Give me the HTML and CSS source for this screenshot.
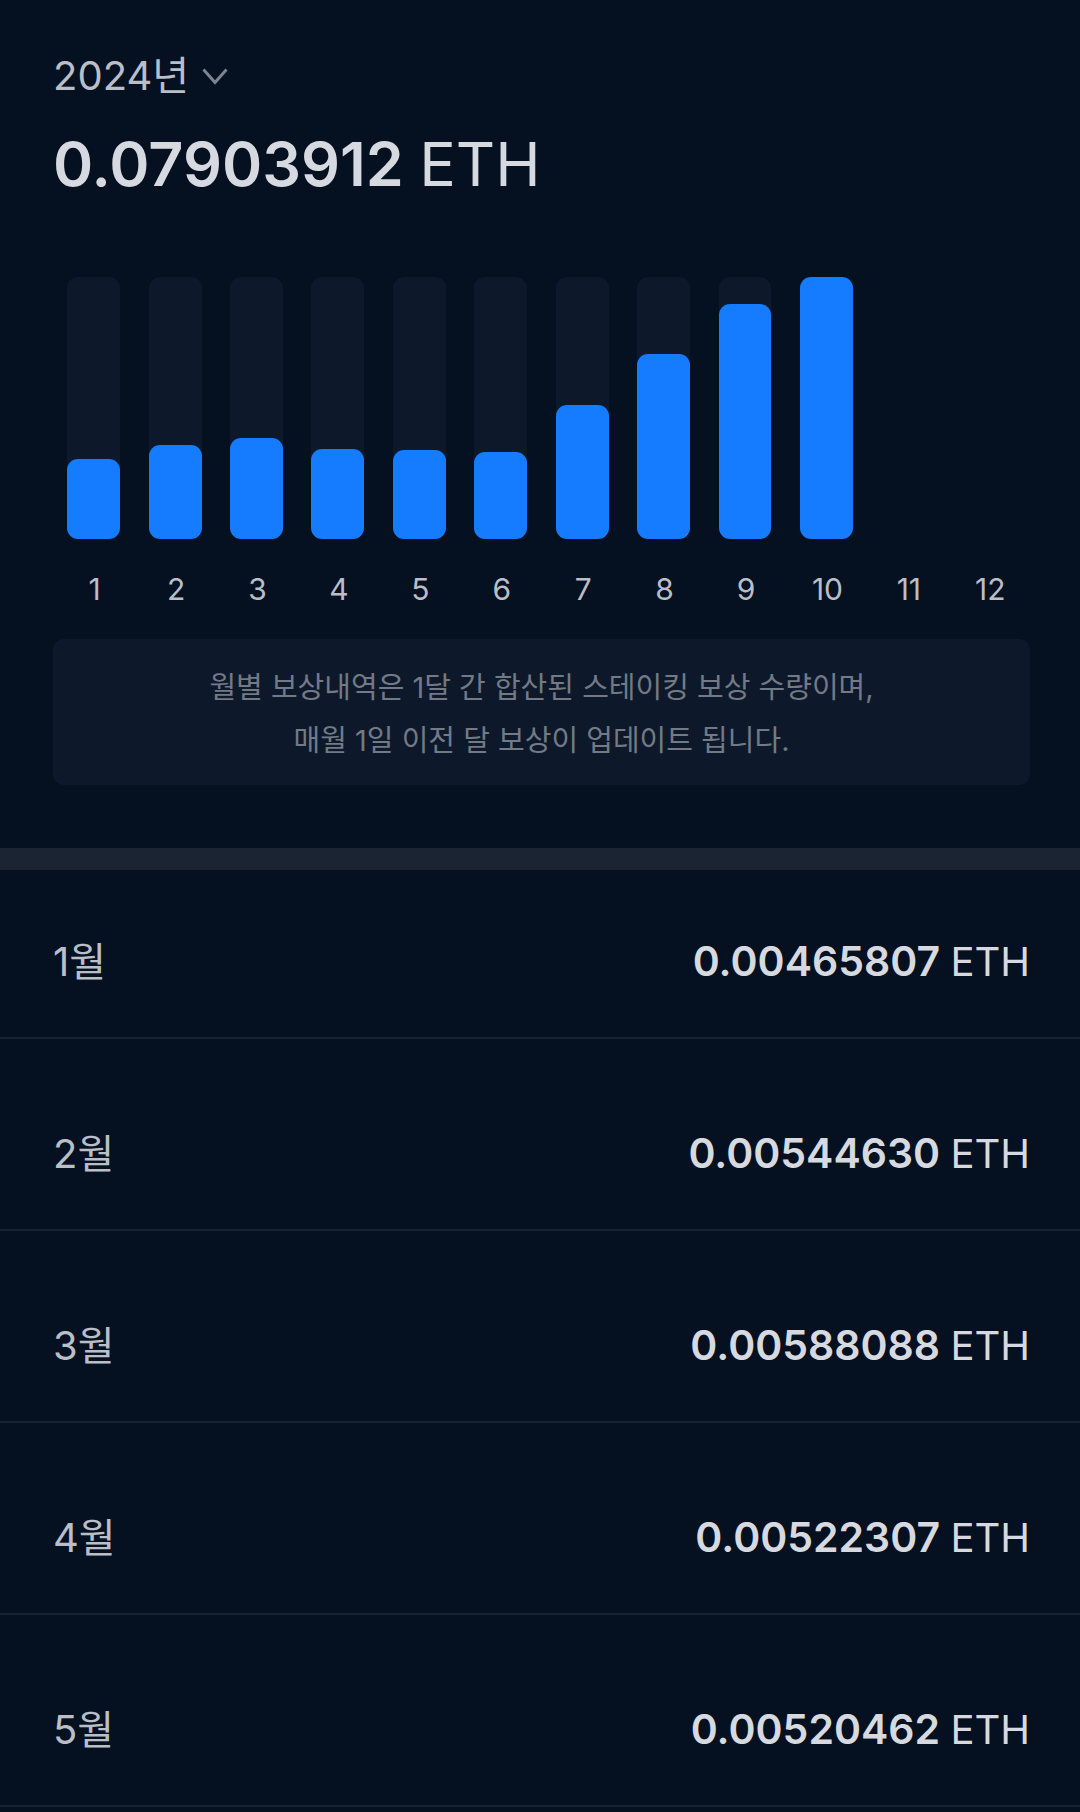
FILE: index.html
```html
<!DOCTYPE html>
<html lang="ko">
<head>
<meta charset="utf-8">
<meta name="viewport" content="width=device-width, initial-scale=1">
<title>스테이킹 보상</title>
<link rel="stylesheet" href="styles.css">
</head>
<body>
<main class="page">
  <section class="summary">
    <div class="year">
      <select class="year-select" aria-label="연도">
        <option>2024년</option>
      </select>
      <svg class="year-icon" viewBox="0 0 26 18" aria-hidden="true"><path d="M1.500 2.500 13 15.500 24.500 2.500"/></svg>
    </div>
    <h1 class="total">0.07903912 <span class="unit">ETH</span></h1>
    <ol class="chart">
      <li class="month"><div class="track"><div class="bar" style="height:30.500%"></div></div><span class="label">1</span></li>
      <li class="month"><div class="track"><div class="bar" style="height:35.800%"></div></div><span class="label">2</span></li>
      <li class="month"><div class="track"><div class="bar" style="height:38.600%"></div></div><span class="label">3</span></li>
      <li class="month"><div class="track"><div class="bar" style="height:34.300%"></div></div><span class="label">4</span></li>
      <li class="month"><div class="track"><div class="bar" style="height:34.100%"></div></div><span class="label">5</span></li>
      <li class="month"><div class="track"><div class="bar" style="height:33.300%"></div></div><span class="label">6</span></li>
      <li class="month"><div class="track"><div class="bar" style="height:51.100%"></div></div><span class="label">7</span></li>
      <li class="month"><div class="track"><div class="bar" style="height:70.500%"></div></div><span class="label">8</span></li>
      <li class="month"><div class="track"><div class="bar" style="height:89.800%"></div></div><span class="label">9</span></li>
      <li class="month"><div class="track"><div class="bar" style="height:100%"></div></div><span class="label">10</span></li>
      <li class="month"><div class="track track-empty"></div><span class="label">11</span></li>
      <li class="month"><div class="track track-empty"></div><span class="label">12</span></li>
    </ol>
    <p class="note">월별 보상내역은 1달 간 합산된 스테이킹 보상 수량이며,<br>매월 1일 이전 달 보상이 업데이트 됩니다.</p>
  </section>
  <dl class="rewards">
    <div class="row"><dt class="name">1월</dt><dd class="amount">0.00465807 <span class="unit">ETH</span></dd></div>
    <div class="row"><dt class="name">2월</dt><dd class="amount">0.00544630 <span class="unit">ETH</span></dd></div>
    <div class="row"><dt class="name">3월</dt><dd class="amount">0.00588088 <span class="unit">ETH</span></dd></div>
    <div class="row"><dt class="name">4월</dt><dd class="amount">0.00522307 <span class="unit">ETH</span></dd></div>
    <div class="row"><dt class="name">5월</dt><dd class="amount">0.00520462 <span class="unit">ETH</span></dd></div>
  </dl>
</main>
</body>
</html>
```
FILE: styles.css
```css
* {
  box-sizing: border-box;
}

body {
  margin: 0;
  background: #051120;
  color: #d6d9df;
  font-family: Inter, "Noto Sans CJK KR", sans-serif;
}

.summary {
  padding: 46px 50px 63px 53px;
  border-bottom: 22px solid #1b2433;
}

.year {
  display: flex;
  align-items: center;
  gap: 13px;
}

.year-select {
  appearance: none;
  field-sizing: content;
  margin: 0;
  padding: 0;
  border: 0;
  background: transparent;
  color: #b9bec7;
  font-family: inherit;
  font-size: 40px;
  line-height: 60px;
}

.year-icon {
  width: 26px;
  height: 18px;
  fill: none;
  stroke: #7d8490;
  stroke-width: 3;
}

.total {
  margin: 18px 0 0;
  font-size: 61px;
  font-weight: 600;
  line-height: 80px;
}

.unit {
  font-weight: 400;
}

.chart {
  display: grid;
  grid-template-columns: repeat(12, 1fr);
  margin: 73px 0 0;
  padding: 0;
  list-style: none;
}

.month {
  display: flex;
  flex-direction: column;
  align-items: center;
  gap: 30px;
}

.track {
  display: flex;
  align-items: flex-end;
  width: 65%;
  height: 262px;
  border-radius: 11px;
  background: #0d192a;
}

.track-empty {
  background: transparent;
}

.bar {
  width: 100%;
  border-radius: 11px;
  background: #157bff;
}

.label {
  padding-left: 2px;
  color: #b9bec7;
  font-size: 30px;
  line-height: 40px;
}

.note {
  margin: 30px 0 0;
  padding: 22px 20px 18px;
  border-radius: 11px;
  background: #0d192a;
  color: #737a86;
  font-size: 29px;
  line-height: 53px;
  text-align: center;
}

.rewards {
  margin: 0;
}

.row {
  display: flex;
  align-items: flex-end;
  justify-content: space-between;
  height: 192px;
  padding: 0 50px 45px 53px;
  border-bottom: 2px solid #182231;
  font-size: 40px;
  line-height: 60px;
}

.row:first-child {
  height: 169px;
}

.name {
  color: #b9bec7;
}

.amount {
  margin: 0;
  font-size: 41px;
  font-weight: 600;
}

.amount .unit {
  font-size: 40px;
}
```
